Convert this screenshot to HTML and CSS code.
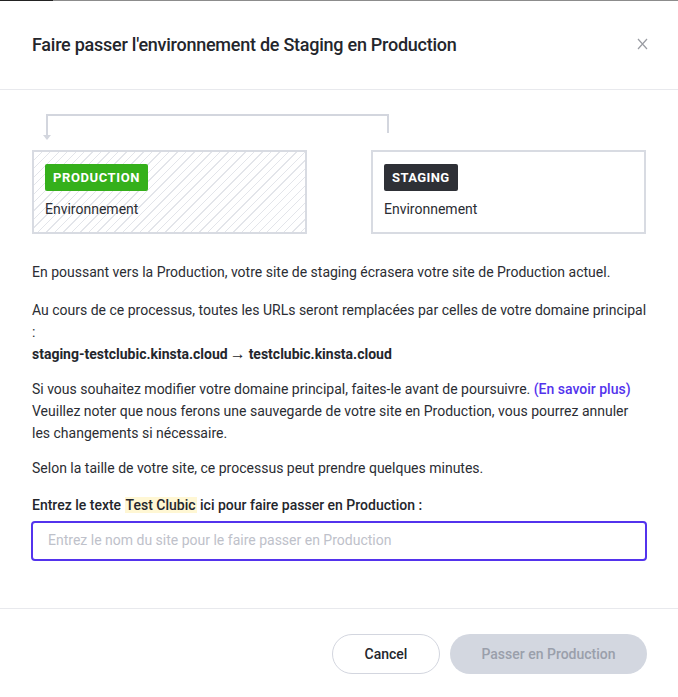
FILE: index.html
```html
<!DOCTYPE html>
<html lang="fr">
<head>
<meta charset="utf-8">
<title>Faire passer l'environnement de Staging en Production</title>
<link rel="stylesheet" href="styles.css">
</head>
<body>
<div class="topbar"><span class="topbar-dark"></span></div>
<div class="modal">
  <header class="modal-header">
    <h2 class="modal-title">Faire passer l'environnement de Staging en Production</h2>
    <button class="close" aria-label="Fermer">
      <svg width="11" height="12" viewBox="0 0 11 12"><path d="M1 1 L10 11 M10 1 L1 11" stroke="#9a9ca3" stroke-width="1.2" fill="none"/></svg>
    </button>
  </header>
  <div class="modal-body">
    <svg class="connector" width="614" height="37" viewBox="0 0 614 37">
      <path d="M356 20 V2 H15 V22" stroke="#d3d6de" stroke-width="2" fill="none"/>
      <path d="M11 22 H19 L15 27 Z" fill="#d3d6de"/>
    </svg>
    <div class="envs">
      <div class="env env-target">
        <span class="badge badge-prod">PRODUCTION</span>
        <span class="env-label">Environnement</span>
      </div>
      <div class="env">
        <span class="badge badge-staging">STAGING</span>
        <span class="env-label">Environnement</span>
      </div>
    </div>
    <div class="text">
      <p class="lead">En poussant vers la Production, votre site de staging écrasera votre site de Production actuel.</p>
      <p class="urls">Au cours de ce processus, toutes les URLs seront remplacées par celles de votre domaine principal :<br><strong>staging-testclubic.kinsta.cloud<span class="arrow">→</span>testclubic.kinsta.cloud</strong></p>
      <p>Si vous souhaitez modifier votre domaine principal, faites-le avant de poursuivre. <a href="#" class="link">(En savoir plus)</a> Veuillez noter que nous ferons une sauvegarde de votre site en Production, vous pourrez annuler les changements si nécessaire.</p>
      <p>Selon la taille de votre site, ce processus peut prendre quelques minutes.</p>
    </div>
    <label class="field-label" for="site">Entrez le texte <mark class="hl">Test Clubic</mark> ici pour faire passer en Production :</label>
    <input id="site" class="field" type="text" placeholder="Entrez le nom du site pour le faire passer en Production">
  </div>
  <footer class="modal-footer">
    <button class="btn btn-cancel">Cancel</button>
    <button class="btn btn-primary" disabled>Passer en Production</button>
  </footer>
</div>
</body>
</html>
```
FILE: styles.css
```css
* { box-sizing: border-box; }
html, body { margin: 0; padding: 0; background: #fff; }
body {
  font-family: Roboto, "Noto Sans", "Liberation Sans", sans-serif;
  color: #2b2d33;
  font-size: 14px;
}
.topbar {
  height: 1px;
  background: #8c8c8c;
  display: flex;
}
.topbar-dark { width: 53px; background: #222; }

.modal { width: 678px; }
.modal-header {
  height: 89px;
  border-bottom: 1px solid #e8e9ed;
  display: flex;
  align-items: center;
  justify-content: space-between;
  padding: 0 30px 2px 32px;
}
.modal-title {
  margin: 0;
  font-size: 18px;
  font-weight: 500;
  color: #24262c;
  letter-spacing: -0.25px;
}
.close {
  border: 0;
  background: none;
  padding: 0;
  width: 11px;
  height: 12px;
  display: flex;
}

.modal-body { padding: 23px 32px 0 32px; }
.connector { display: block; }
.envs {
  display: grid;
  grid-template-columns: 1fr 1fr;
  gap: 64px;
}
.env {
  border: 2px solid #d8dbe2;
  height: 84px;
  padding: 12px 11px 0 11px;
  display: flex;
  flex-direction: column;
  align-items: flex-start;
  gap: 8px;
}
.env-target {
  background: repeating-linear-gradient(135deg, #fff 0, #fff 5px, #e3e5ea 5px, #e3e5ea 6px);
}
.badge {
  display: inline-block;
  height: 27px;
  line-height: 27px;
  padding: 0 8px;
  border-radius: 2px;
  color: #fff;
  font-weight: 700;
  font-size: 13px;
  letter-spacing: 0.6px;
}
.badge-prod { background: #35b01b; }
.badge-staging { background: #2e3036; letter-spacing: 0.4px; }
.env-label { font-size: 14px; line-height: 20px; color: #2b2d33; }

.text { margin-top: 27px; }
.text p { margin: 0 0 13px 0; line-height: 22px; }
.text p.lead { margin-bottom: 16px; }
.text p.urls { margin-right: -4px; }
.text strong { font-weight: 700; color: #24262c; }
.arrow { font-size: 16px; margin: 0 3px 0 2px; }
.link { color: #5333ed; text-decoration: none; font-weight: 500; }

.field-label {
  display: block;
  margin-top: 15px;
  font-weight: 500;
  line-height: 22px;
  color: #24262c;
}
.hl { background: #fff7d4; color: inherit; padding: 0 1px; }
.field {
  display: block;
  margin-top: 5px;
  width: 616px;
  margin-left: -1px;
  height: 40px;
  border: 2px solid #5333ed;
  border-radius: 4px;
  padding: 0 15px 2px 15px;
  font-family: inherit;
  font-size: 14px;
  color: #2b2d33;
  outline: none;
}
.field::placeholder { color: #bec1ca; }

.modal-footer {
  margin-top: 47px;
  border-top: 1px solid #e8e9ed;
  padding: 25px 31px 23px 32px;
  display: flex;
  justify-content: flex-end;
  gap: 10px;
}
.btn {
  height: 40px;
  border-radius: 20px;
  font-family: inherit;
  font-size: 14px;
  font-weight: 500;
  padding: 0;
}
.btn-cancel {
  width: 108px;
  background: #fff;
  border: 1px solid #d3d6df;
  color: #24262c;
}
.btn-primary {
  width: 197px;
  background: #d3d7e0;
  border: 0;
  color: #9a9fab;
}
```
